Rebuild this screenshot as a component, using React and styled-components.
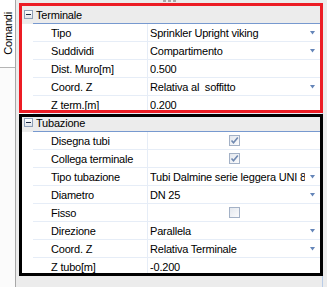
import React from "react";
import styled, { createGlobalStyle } from "styled-components";

const GlobalStyle = createGlobalStyle`
  html, body {
    margin: 0;
    padding: 0;
    background: #ececec;
  }
  * {
    box-sizing: border-box;
  }
`;

const Page = styled.div`
  display: flex;
  width: 327px;
  height: 287px;
  overflow: hidden;
  background: #ececec;
  font-family: "Liberation Sans", Arial, sans-serif;
  font-size: 11px;
  letter-spacing: -0.2px;
  color: #000;
`;

const SideStrip = styled.div`
  width: 16px;
  flex: none;
  background: #fbfbfb;
  border-right: 1px solid #a7a7a7;
`;

const Tab = styled.div`
  height: 68px;
  display: flex;
  align-items: center;
  justify-content: center;
  background: #fff;
  border-bottom: 1px solid #b5b5b5;
`;

const TabLabel = styled.span`
  writing-mode: vertical-rl;
  transform: rotate(180deg);
  font-size: 11px;
  line-height: 12px;
`;

const Main = styled.div`
  flex: 1;
  min-width: 0;
  display: flex;
  flex-direction: column;
  padding: 6px 4px 0 3px;
  position: relative;
`;

const Grip = styled.div`
  position: absolute;
  top: 0;
  left: 147px;
  display: flex;
  gap: 2px;
  & span {
    width: 3px;
    height: 2px;
    background: #a9a9a9;
  }
`;

const Grid = styled.div`
  flex: 1;
  min-width: 0;
  display: flex;
  flex-direction: column;
  border-right: 1px solid #b8cce8;
`;

const Section = styled.div`
  position: relative;
  &::after {
    content: "";
    position: absolute;
    left: 0;
    right: -1px;
    top: ${(p) => p.$top}px;
    bottom: ${(p) => p.$bottom}px;
    border: 3px solid ${(p) => p.$color};
    pointer-events: none;
  }
`;

const Header = styled.div`
  height: 18px;
  display: flex;
  align-items: stretch;
  background: #ececec;
`;

const Toggle = styled.div`
  width: 9px;
  height: 9px;
  margin: 4px 0 0 5px;
  border: 1px solid #8e9fb8;
  background: linear-gradient(#ffffff, #dfe4ea);
  position: relative;
  &::after {
    content: "";
    position: absolute;
    left: 1px;
    right: 1px;
    top: 3px;
    height: 1px;
    background: #1c2a44;
  }
`;

const HeaderTitle = styled.div`
  flex: 1;
  display: flex;
  align-items: center;
  padding-left: 3px;
  padding-top: 1px;
  border-bottom: 1px solid #7799cf;
`;

const Row = styled.div`
  height: 18px;
  display: flex;
  background: #fff;
`;

const Gutter = styled.div`
  width: 14px;
  flex: none;
`;

const Label = styled.div`
  width: 115px;
  flex: none;
  padding-left: 18px;
  display: flex;
  align-items: center;
  white-space: nowrap;
  overflow: hidden;
  border-bottom: 1px solid #e6edf7;
  border-right: 1px solid #e6edf7;
`;

const Value = styled.div`
  flex: 1;
  min-width: 0;
  display: flex;
  align-items: center;
  justify-content: ${(p) => (p.$center ? "center" : "flex-start")};
  padding-left: ${(p) => (p.$center ? 0 : 2)}px;
  border-bottom: 1px solid #e6edf7;
`;

const ValueText = styled.span`
  flex: 1;
  min-width: 0;
  white-space: pre;
  overflow: hidden;
`;

const Arrow = styled.svg`
  width: 5px;
  height: 4px;
  flex: none;
  margin: 0 7px 0 5px;
`;

const CheckBox = styled.div`
  width: 11px;
  height: 11px;
  margin-right: 1px;
  border: 1px solid #a3b1c6;
  background: linear-gradient(135deg, #e4e8ee, #fbfbfc);
  display: flex;
  align-items: center;
  justify-content: center;
`;

const Tail = styled.div`
  flex: 1;
  background: #ececec;
`;

const DropArrow = () => (
  <Arrow viewBox="0 0 5 4">
    <polygon points="0,0 5,0 2.5,3.5" fill="#6485b8" />
  </Arrow>
);

const Check = ({ checked }) => (
  <CheckBox>
    {checked && (
      <svg width="9" height="9" viewBox="0 0 9 9">
        <path
          d="M1.5 4.5 L3.5 6.8 L7.8 1.5"
          fill="none"
          stroke="#7089b0"
          strokeWidth="1.6"
        />
      </svg>
    )}
  </CheckBox>
);

const Property = ({ label, value, drop, check }) => (
  <Row>
    <Gutter />
    <Label>{label}</Label>
    {check !== undefined ? (
      <Value $center>
        <Check checked={check} />
      </Value>
    ) : (
      <Value>
        <ValueText>{value}</ValueText>
        {drop && <DropArrow />}
      </Value>
    )}
  </Row>
);

const terminale = [
  { label: "Tipo", value: "Sprinkler Upright viking", drop: true },
  { label: "Suddividi", value: "Compartimento", drop: true },
  { label: "Dist. Muro[m]", value: "0.500" },
  { label: "Coord. Z", value: "Relativa al  soffitto", drop: true },
  { label: "Z term.[m]", value: "0.200" },
];

const tubazione = [
  { label: "Disegna tubi", check: true },
  { label: "Collega terminale", check: true },
  { label: "Tipo tubazione", value: "Tubi Dalmine serie leggera UNI 8863", drop: true },
  { label: "Diametro", value: "DN 25", drop: true },
  { label: "Fisso", check: false },
  { label: "Direzione", value: "Parallela", drop: true },
  { label: "Coord. Z", value: "Relativa Terminale", drop: true },
  { label: "Z tubo[m]", value: "-0.200" },
];

const Category = ({ title, items, color, top, bottom }) => (
  <Section $color={color} $top={top} $bottom={bottom}>
    <Header>
      <Toggle />
      <HeaderTitle>{title}</HeaderTitle>
    </Header>
    {items.map((it, i) => (
      <Property key={i} {...it} />
    ))}
  </Section>
);

export default function App() {
  return (
    <>
      <GlobalStyle />
      <Page>
        <SideStrip>
          <Tab>
            <TabLabel>Comandi</TabLabel>
          </Tab>
        </SideStrip>
        <Main>
          <Grip>
            <span />
            <span />
            <span />
          </Grip>
          <Grid>
            <Category title="Terminale" items={terminale} color="#ec1c24" top={-3} bottom={1} />
            <Category title="Tubazione" items={tubazione} color="#000" top={0} bottom={0} />
            <Tail />
          </Grid>
        </Main>
      </Page>
    </>
  );
}
